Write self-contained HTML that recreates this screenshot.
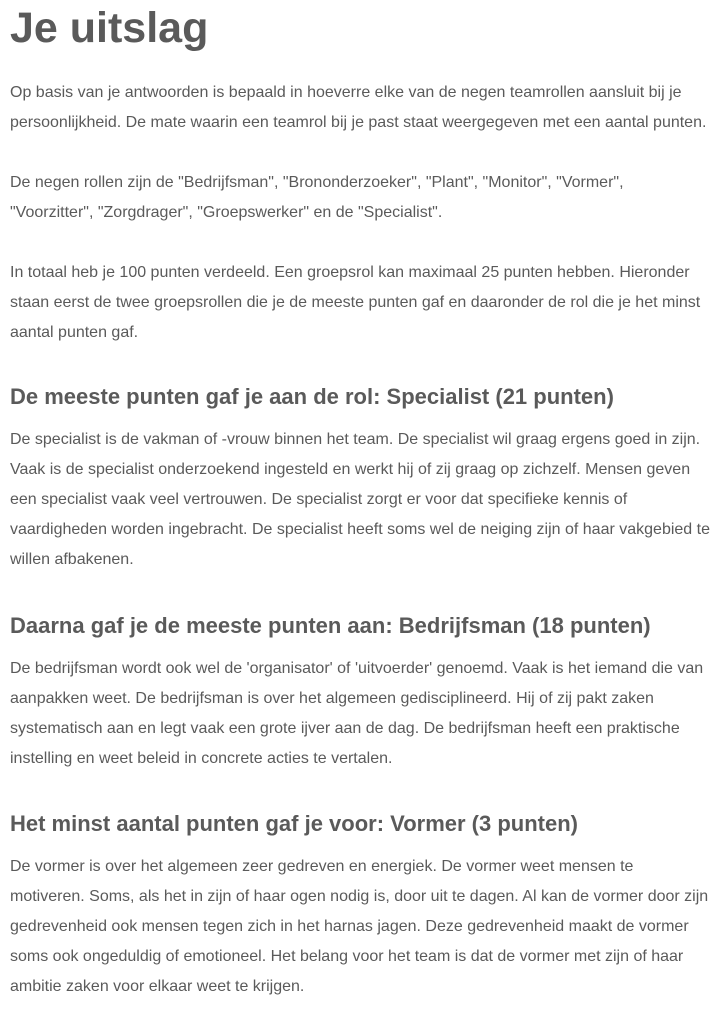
<!DOCTYPE html>
<html><head><meta charset="utf-8"><style>
body{margin:0;padding:0 10px;width:700px;background:#fff;color:#5a5a5a;font-family:"Liberation Sans",Arial,sans-serif;}
h1{margin:0 0 22px;font-size:43px;line-height:56px;font-weight:bold;}
p{margin:0 0 30px;font-size:16px;line-height:30px;}
h2{margin:34px 0 13px;font-size:22px;line-height:30px;font-weight:bold;}
h2+p{margin-bottom:0;}
</style></head><body>
<h1>Je uitslag</h1>
<p>Op basis van je antwoorden is bepaald in hoeverre elke van de negen teamrollen aansluit bij je persoonlijkheid. De mate waarin een teamrol bij je past staat weergegeven met een aantal punten.</p>
<p>De negen rollen zijn de "Bedrijfsman", "Brononderzoeker", "Plant", "Monitor", "Vormer", "Voorzitter", "Zorgdrager", "Groepswerker" en de "Specialist".</p>
<p style="margin-bottom:0">In totaal heb je 100 punten verdeeld. Een groepsrol kan maximaal 25 punten hebben. Hieronder staan eerst de twee groepsrollen die je de meeste punten gaf en daaronder de rol die je het minst aantal punten gaf.</p>
<h2>De meeste punten gaf je aan de rol: Specialist (21 punten)</h2>
<p>De specialist is de vakman of -vrouw binnen het team. De specialist wil graag ergens goed in zijn. Vaak is de specialist onderzoekend ingesteld en werkt hij of zij graag op zichzelf. Mensen geven een specialist vaak veel vertrouwen. De specialist zorgt er voor dat specifieke kennis of vaardigheden worden ingebracht. De specialist heeft soms wel de neiging zijn of haar vakgebied te willen afbakenen.</p>
<h2 style="margin-top:36px">Daarna gaf je de meeste punten aan: Bedrijfsman (18 punten)</h2>
<p>De bedrijfsman wordt ook wel de 'organisator' of 'uitvoerder' genoemd. Vaak is het iemand die van aanpakken weet. De bedrijfsman is over het algemeen gedisciplineerd. Hij of zij pakt zaken systematisch aan en legt vaak een grote ijver aan de dag. De bedrijfsman heeft een praktische instelling en weet beleid in concrete acties te vertalen.</p>
<h2 style="margin-top:35px">Het minst aantal punten gaf je voor: Vormer (3 punten)</h2>
<p>De vormer is over het algemeen zeer gedreven en energiek. De vormer weet mensen te motiveren. Soms, als het in zijn of haar ogen nodig is, door uit te dagen. Al kan de vormer door zijn gedrevenheid ook mensen tegen zich in het harnas jagen. Deze gedrevenheid maakt de vormer soms ook ongeduldig of emotioneel. Het belang voor het team is dat de vormer met zijn of haar ambitie zaken voor elkaar weet te krijgen.</p>
</body></html>
